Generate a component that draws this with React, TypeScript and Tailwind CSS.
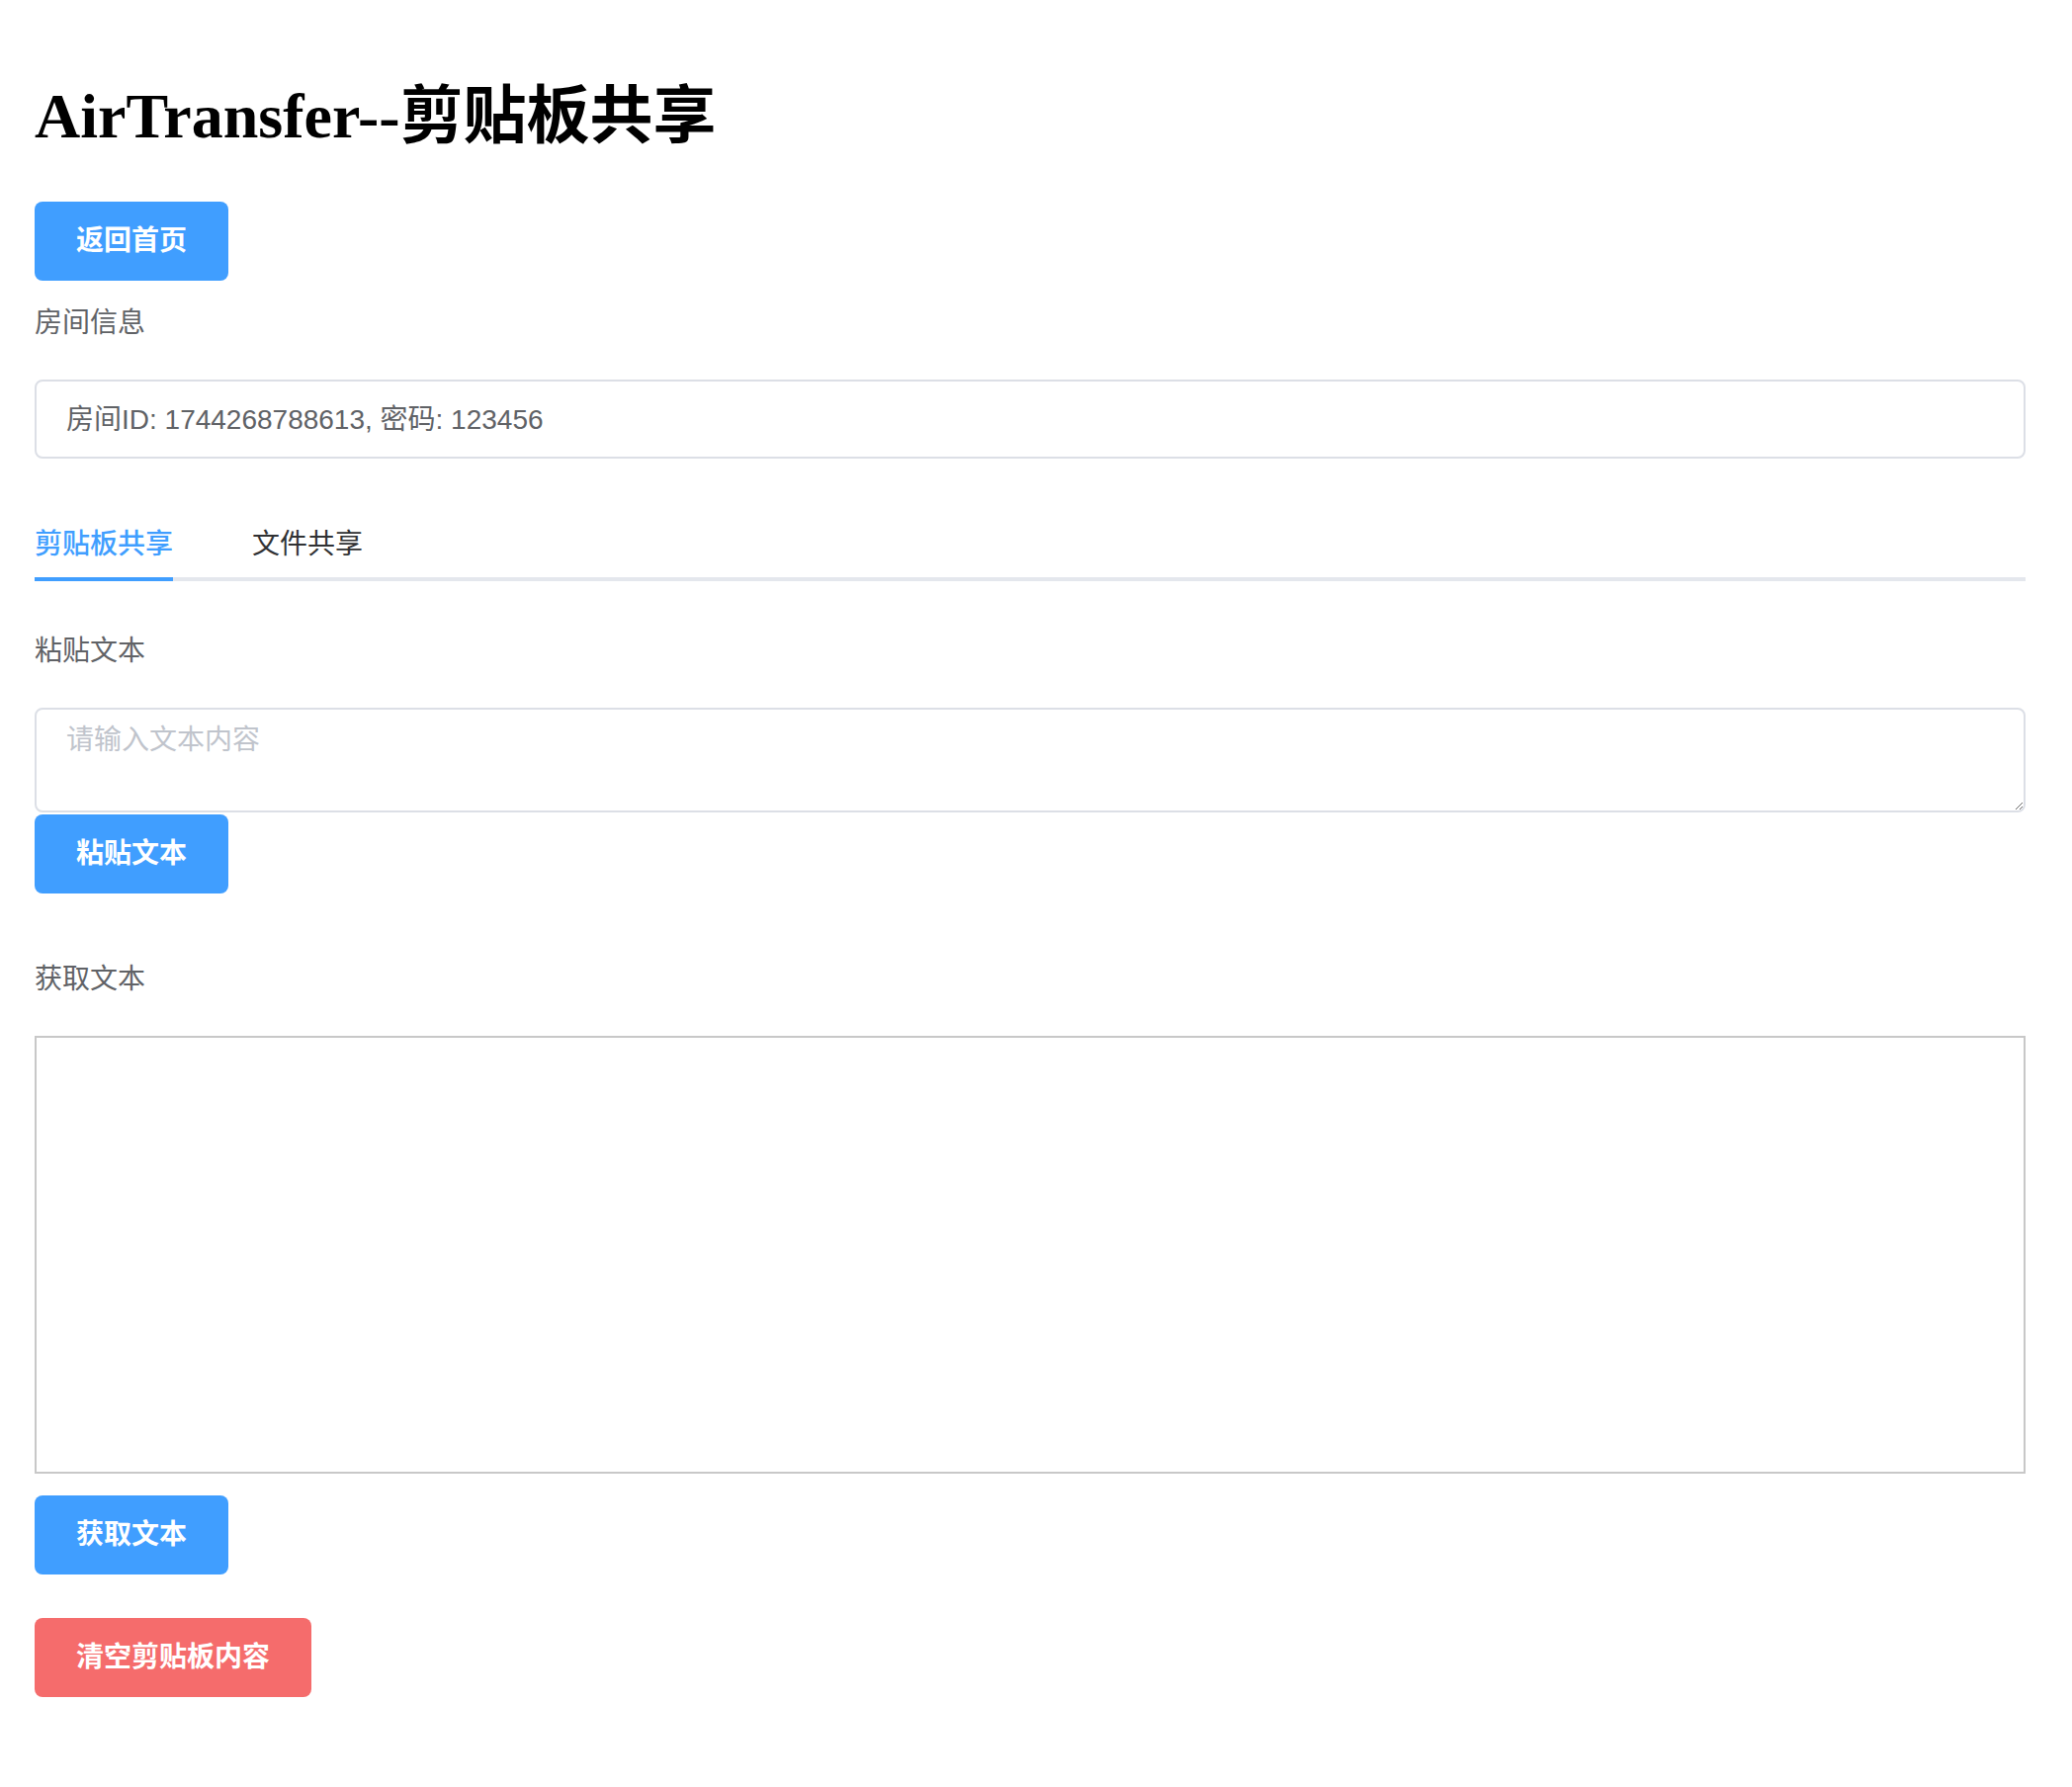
const sans = "font-['Liberation_Sans','Noto_Sans_CJK_SC',sans-serif]";
const serif = "font-['Liberation_Serif','Noto_Sans_CJK_SC',serif]";

function Btn({ label, danger }: { label: string; danger?: boolean }) {
  return (
    <button
      className={`h-[80px] px-[42px] rounded-[8px] text-white text-[28px] font-bold ${sans} ${
        danger ? "bg-[#F56C6C]" : "bg-[#409EFF]"
      }`}
    >
      {label}
    </button>
  );
}

function Label({ text }: { text: string }) {
  return (
    <div className={`h-[80px] pt-[5px] leading-[75px] text-[28px] text-[#606266] ${serif}`}>{text}</div>
  );
}

export default function App() {
  return (
    <div className="min-h-[1808px] bg-white pt-[81px] pl-[35px] pr-[47px]">
      <h1 className={`text-[64px] leading-[74px] font-bold text-black ${serif}`}>AirTransfer--剪贴板共享</h1>

      <div className="mt-[49px]">
        <Btn label="返回首页" />
      </div>

      <Label text="房间信息" />
      <input
        readOnly
        value="房间ID: 1744268788613, 密码: 123456"
        className={`mt-[20px] block w-full h-[80px] px-[30px] pb-[5px] rounded-[8px] border-2 border-[#DCDFE6] text-[28px] text-[#606266] outline-none ${sans}`}
      />

      <div className="mt-[42px] flex border-b-4 border-[#E4E7ED]">
        <div
          className={`-mb-[4px] h-[82px] pt-[11px] leading-[67px] border-b-4 border-[#409EFF] text-[28px] font-medium text-[#409EFF] ${sans}`}
        >
          剪贴板共享
        </div>
        <div className={`ml-[80px] h-[78px] pt-[11px] leading-[67px] text-[28px] text-[#303133] ${serif}`}>
          文件共享
        </div>
      </div>

      <div className="mt-[28px]">
        <Label text="粘贴文本" />
      </div>
      <textarea
        rows={2}
        placeholder="请输入文本内容"
        className={`mt-[20px] block w-full h-[106px] px-[30px] py-[10px] rounded-[8px] border-2 border-[#DCDFE6] text-[28px] leading-[42px] text-[#606266] placeholder:text-[#C0C4CC] outline-none resize-y ${sans}`}
      />
      <div className="mt-[2px]">
        <Btn label="粘贴文本" />
      </div>

      <div className="mt-[44px]">
        <Label text="获取文本" />
      </div>
      <textarea
        readOnly
        className="mt-[20px] block w-full h-[443px] border-2 border-[#C8C8C8] outline-none resize-none"
      />
      <div className="mt-[22px]">
        <Btn label="获取文本" />
      </div>
      <div className="mt-[44px]">
        <Btn label="清空剪贴板内容" danger />
      </div>
    </div>
  );
}
